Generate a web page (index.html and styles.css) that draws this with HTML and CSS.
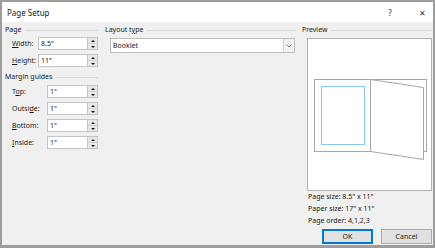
FILE: index.html
```html
<!DOCTYPE html>
<html lang="en">
<head>
    <meta charset="UTF-8">
    <title>Page Setup</title>
    <link rel="stylesheet" href="styles.css">
</head>
<body>
    <div class="dialog">
        <!-- Title bar -->
        <div class="titlebar">
            <span class="title">Page Setup</span>
            <span class="help">?</span>
            <span class="close">&#x2715;</span>
        </div>

        <div class="panel">
            <!-- Page + margins -->
            <div class="col col-left">
                <div class="group"><span>Page</span></div>
                <div class="field">
                    <span class="label short"><u>W</u>idth:</span>
                    <span class="box wide">8.5"</span>
                    <span class="spin"><i class="up"></i><i class="down"></i></span>
                </div>
                <div class="field">
                    <span class="label short"><u>H</u>eight:</span>
                    <span class="box wide">11"</span>
                    <span class="spin"><i class="up"></i><i class="down"></i></span>
                </div>

                <div class="group group-gap"><span>Margin guides</span></div>
                <div class="field first">
                    <span class="label">T<u>o</u>p:</span>
                    <span class="box">1"</span>
                    <span class="spin"><i class="up"></i><i class="down"></i></span>
                </div>
                <div class="field">
                    <span class="label">Outsi<u>d</u>e:</span>
                    <span class="box">1"</span>
                    <span class="spin"><i class="up"></i><i class="down"></i></span>
                </div>
                <div class="field">
                    <span class="label"><u>B</u>ottom:</span>
                    <span class="box">1"</span>
                    <span class="spin"><i class="up"></i><i class="down"></i></span>
                </div>
                <div class="field">
                    <span class="label"><u>I</u>nside:</span>
                    <span class="box">1"</span>
                    <span class="spin"><i class="up"></i><i class="down"></i></span>
                </div>
            </div>

            <!-- Layout type -->
            <div class="col col-mid">
                <div class="group"><span>Layout t<u>y</u>pe</span></div>
                <div class="select">
                    <span class="select-text">Booklet</span>
                    <span class="select-arrow">
                        <svg width="6" height="4" viewBox="0 0 6 4"><path d="M0.5 0.5 L3 3 L5.5 0.5" fill="none" stroke="#777" stroke-width="0.9"/></svg>
                    </span>
                </div>
            </div>

            <!-- Preview -->
            <div class="col col-right">
                <div class="group"><span>Preview</span></div>
                <div class="preview">
                    <svg width="123" height="151" viewBox="0 0 123 151">
                        <rect x="6.5" y="40.5" width="112" height="72" fill="#fff" stroke="#a6a6a6"/>
                        <rect x="13.5" y="47.5" width="43" height="58" fill="#fff" stroke="#8ec5f7"/>
                        <polygon points="62.5,40.5 115.5,48.5 115.5,120.5 62.5,112.5" fill="#fff" stroke="#a6a6a6"/>
                    </svg>
                </div>
                <div class="info">Page size: 8.5" x 11"</div>
                <div class="info">Paper size: 17" x 11"</div>
                <div class="info">Page order: 4,1,2,3</div>
                <div class="buttons">
                    <span class="btn btn-default">OK</span>
                    <span class="btn">Cancel</span>
                </div>
            </div>
        </div>
    </div>
</body>
</html>
```

FILE: styles.css
```css
/* Dialog frame */
body {
    margin: 0;
    font-family: "Noto Sans", "Open Sans", sans-serif;
    color: #1a1a1a;
}
.dialog {
    width: 431px;
    height: 243px;
    border: 2px solid #9d9d9d;
    border-bottom-width: 3px;
    background: #f0f0f0;
    display: flex;
    flex-direction: column;
}
/* Title bar */
.titlebar {
    height: 20px;
    background: #fff;
    display: flex;
    align-items: center;
    padding-left: 5px;
    font-size: 8px;
}
.title {
    flex: 1;
}
.help {
    width: 20px;
    margin-right: 11px;
    text-align: center;
    color: #333;
}
.close {
    width: 22px;
    text-align: center;
    color: #333;
    font-size: 8px;
}
/* Columns */
.panel {
    flex: 1;
    display: flex;
    padding: 3px 1px 0 3px;
    font-size: 7px;
}
.col-left {
    width: 93px;
    margin-right: 7px;
}
.col-mid {
    width: 192px;
    margin-right: 5px;
}
.col-right {
    width: 130px;
}
/* Group headers with a rule after the text */
.group {
    display: flex;
    align-items: center;
    height: 10px;
    line-height: 10px;
}
.group::after {
    content: "";
    flex: 1;
    height: 1px;
    background: #dadada;
    margin-left: 4px;
}
.group-gap {
    margin-top: 5px;
}
/* Spin fields */
.field {
    display: flex;
    align-items: center;
    height: 13px;
    margin-top: 4px;
    padding-left: 7px;
}
.col-left .group + .field {
    margin-top: 2px;
}
.col-left .group-gap + .field {
    margin-top: 3px;
}
.label {
    width: 35px;
}
.label.short {
    width: 26px;
}
.box {
    box-sizing: border-box;
    width: 41px;
    height: 13px;
    line-height: 11px;
    padding-left: 2px;
    background: #fff;
    border: 1px solid #c4c4c4;
}
.box.wide {
    width: 50px;
}
.spin {
    box-sizing: border-box;
    width: 10px;
    height: 13px;
    border: 1px solid #c4c4c4;
    border-left: none;
    background: #e8e8e8;
    display: flex;
    flex-direction: column;
}
.spin i {
    flex: 1;
    display: flex;
    align-items: center;
    justify-content: center;
}
.spin .up {
    border-bottom: 1px solid #d0d0d0;
}
.spin .up::before {
    content: "";
    border-left: 2px solid transparent;
    border-right: 2px solid transparent;
    border-bottom: 2px solid #111;
}
.spin .down::before {
    content: "";
    border-left: 2px solid transparent;
    border-right: 2px solid transparent;
    border-top: 2px solid #111;
}
/* Layout dropdown */
.select {
    box-sizing: border-box;
    display: flex;
    width: 185px;
    height: 15px;
    margin: 3px 0 0 5px;
    background: #fff;
    border: 1px solid #bdbdbd;
}
.select-text {
    flex: 1;
    line-height: 13px;
    padding-left: 2px;
}
.select-arrow {
    width: 10px;
    border-left: 1px solid #cfcfcf;
    background: #f2f2f2;
    display: flex;
    align-items: center;
    justify-content: center;
}
/* Preview */
.preview {
    box-sizing: border-box;
    width: 125px;
    height: 153px;
    margin: 3px 0 0 5px;
    background: #fff;
    border: 1px solid #b3b3b3;
}
.preview svg {
    display: block;
}
.info {
    line-height: 12px;
    padding-left: 6px;
}
.buttons {
    display: flex;
    justify-content: flex-end;
    gap: 8px;
    margin-top: 2px;
}
.btn {
    box-sizing: border-box;
    width: 51px;
    height: 15px;
    line-height: 13px;
    text-align: center;
    background: #e1e1e1;
    border: 1px solid #adadad;
}
.btn-default {
    border: 1px solid #0078d7;
    box-shadow: inset 0 0 0 1px #0078d7;
    line-height: 13px;
}
```
